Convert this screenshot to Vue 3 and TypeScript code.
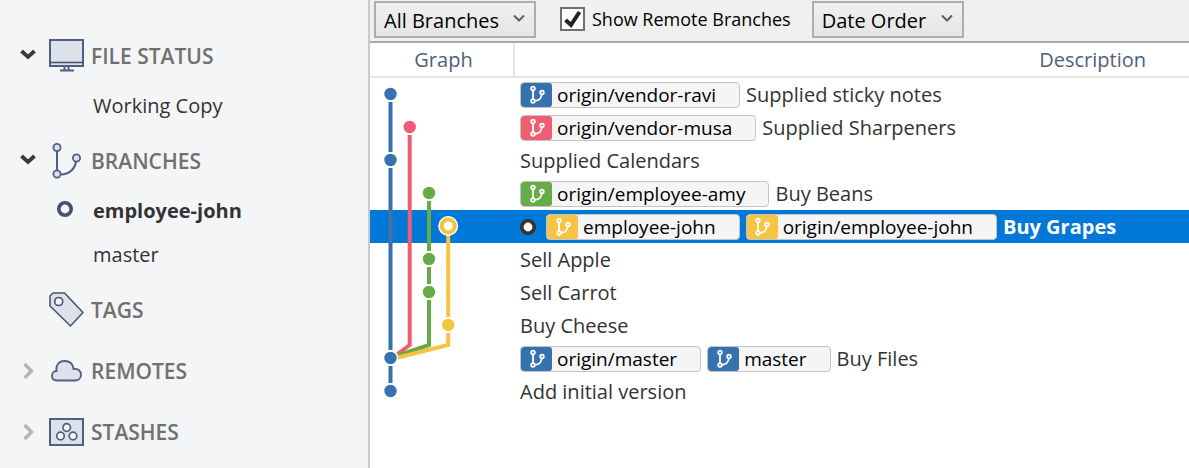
<script setup lang="ts">
import { ref } from 'vue'

type Icon = 'monitor' | 'branch' | 'tag' | 'cloud' | 'stash'
interface Section {
  label: string
  icon: Icon
  caret: 'open' | 'closed' | 'none'
  items: { name: string; current?: boolean }[]
}
interface Dot { lane: number; color: string; ring?: boolean }
interface Line { d: string; color: string }
interface Commit {
  message: string
  tags: { name: string; color: string }[]
  dot: Dot
  lines: Line[]
  selected?: boolean
}

const BLUE = '#3572b0'
const PINK = '#f15c75'
const GREEN = '#67ab49'
const YELLOW = '#f6c342'
const STEEL = '#4b6f9f'

const LANES = [20.5, 39.7, 59, 78.2]
const full = (lane: number, color: string): Line => ({ d: `M${LANES[lane]} 0V33`, color })
const above = (lane: number, color: string): Line => ({ d: `M${LANES[lane]} 0V8`, color })
const below = (lane: number, color: string): Line => ({ d: `M${LANES[lane]} 24V33`, color })

const sections: Section[] = [
  { label: 'FILE STATUS', icon: 'monitor', caret: 'open', items: [{ name: 'Working Copy' }] },
  {
    label: 'BRANCHES', icon: 'branch', caret: 'open',
    items: [{ name: 'employee-john', current: true }, { name: 'master' }],
  },
  { label: 'TAGS', icon: 'tag', caret: 'none', items: [] },
  { label: 'REMOTES', icon: 'cloud', caret: 'closed', items: [] },
  { label: 'STASHES', icon: 'stash', caret: 'closed', items: [] },
]

const commits: Commit[] = [
  {
    message: 'Supplied sticky notes', tags: [{ name: 'origin/vendor-ravi', color: BLUE }],
    dot: { lane: 0, color: BLUE }, lines: [below(0, BLUE)],
  },
  {
    message: 'Supplied Sharpeners', tags: [{ name: 'origin/vendor-musa', color: PINK }],
    dot: { lane: 1, color: PINK }, lines: [full(0, BLUE), below(1, PINK)],
  },
  {
    message: 'Supplied Calendars', tags: [],
    dot: { lane: 0, color: BLUE }, lines: [above(0, BLUE), below(0, BLUE), full(1, PINK)],
  },
  {
    message: 'Buy Beans', tags: [{ name: 'origin/employee-amy', color: GREEN }],
    dot: { lane: 2, color: GREEN }, lines: [full(0, BLUE), full(1, PINK), below(2, GREEN)],
  },
  {
    message: 'Buy Grapes', selected: true,
    tags: [{ name: 'employee-john', color: YELLOW }, { name: 'origin/employee-john', color: YELLOW }],
    dot: { lane: 3, color: YELLOW, ring: true },
    lines: [full(0, STEEL), full(1, PINK), full(2, GREEN), below(3, YELLOW)],
  },
  {
    message: 'Sell Apple', tags: [], dot: { lane: 2, color: GREEN },
    lines: [full(0, BLUE), full(1, PINK), above(2, GREEN), below(2, GREEN), full(3, YELLOW)],
  },
  {
    message: 'Sell Carrot', tags: [], dot: { lane: 2, color: GREEN },
    lines: [full(0, BLUE), full(1, PINK), above(2, GREEN), below(2, GREEN), full(3, YELLOW)],
  },
  {
    message: 'Buy Cheese', tags: [], dot: { lane: 3, color: YELLOW },
    lines: [full(0, BLUE), full(1, PINK), full(2, GREEN), above(3, YELLOW), below(3, YELLOW)],
  },
  {
    message: 'Buy Files', tags: [{ name: 'origin/master', color: BLUE }, { name: 'master', color: BLUE }],
    dot: { lane: 0, color: BLUE },
    lines: [
      above(0, BLUE), below(0, BLUE),
      { d: 'M39.7 0V3L27.5 12', color: PINK },
      { d: 'M59 0V3L28 13.5', color: GREEN },
      { d: 'M78.2 0V3L28 15.5', color: YELLOW },
    ],
  },
  { message: 'Add initial version', tags: [], dot: { lane: 0, color: BLUE }, lines: [above(0, BLUE)] },
]

const branchFilter = ref('All Branches')
const order = ref('Date Order')
const showRemote = ref(true)
</script>

<template>
  <div class="app">
    <nav class="sidebar" aria-label="Repository">
      <section v-for="s in sections" :key="s.label" class="group">
        <button type="button" class="heading">
          <span class="caret">
            <svg v-if="s.caret === 'open'" width="16" height="14" viewBox="0 0 16 14">
              <path d="M1.500 2 8 8l6.500-6" fill="none" stroke="#3a3a3a" stroke-width="3.800" />
            </svg>
            <svg v-else-if="s.caret === 'closed'" width="16" height="16" viewBox="0 0 16 16">
              <path d="M4.500 1 11.500 8l-7 7" fill="none" stroke="#b4b4b4" stroke-width="3.400" />
            </svg>
          </span>
          <span class="icon">
            <svg v-if="s.icon === 'monitor'" width="35" height="34" viewBox="0 0 35 34">
              <rect x="1" y="1" width="33" height="26" fill="#dde1ea" stroke="#505f81" stroke-width="2" />
              <path d="M1 23.500h33" stroke="#42526e" stroke-width="1.500" />
              <path d="M15.500 28v3M19.500 28v3" stroke="#505f81" stroke-width="2" />
              <path d="M11 31.500h14" stroke="#505f81" stroke-width="2" />
            </svg>
            <svg v-else-if="s.icon === 'branch'" width="35" height="36" viewBox="0 0 35 36" fill="none" stroke="#505f81">
              <path d="M8 8v19M12 31.500C20 31.500 26 26 27 18.500" stroke-width="2" />
              <g fill="#dde1ea" stroke-width="1.800">
                <circle cx="8" cy="4.500" r="3.600" />
                <circle cx="8" cy="31" r="3.600" />
                <circle cx="27.500" cy="15" r="3.600" />
              </g>
            </svg>
            <svg v-else-if="s.icon === 'tag'" width="35" height="36" viewBox="0 0 35 36" stroke="#42526e">
              <path d="M1 4 4 1h11.500L34 20.500 21.500 34 1 14z" fill="#dde1ea" stroke-width="1.500" />
              <circle cx="9.700" cy="9.500" r="4" fill="#f4f5f7" stroke-width="1.600" />
            </svg>
            <svg v-else-if="s.icon === 'cloud'" width="35" height="24" viewBox="0 0 35 24">
              <path d="M8 21.500C4.500 21.500 3 19.500 3 17c0-3 2-5 4.500-5C6.500 6 10 2 15.500 2c5 0 8.500 3 9 8 4-.8 7.500 1.800 7.500 5.700 0 3.500-2.500 5.800-6 5.800z" fill="#dde1ea" stroke="#505f81" stroke-width="1.800" />
            </svg>
            <svg v-else width="35" height="28" viewBox="0 0 35 28" stroke="#505f81">
              <rect x="1" y="1" width="33" height="26" fill="#dde1ea" stroke-width="2" />
              <g fill="#f4f5f7" stroke-width="1.700">
                <circle cx="17.700" cy="9.500" r="3.800" />
                <circle cx="11.500" cy="18" r="3.800" />
                <circle cx="24" cy="18" r="3.800" />
              </g>
            </svg>
          </span>
          <span>{{ s.label }}</span>
        </button>
        <a v-for="item in s.items" :key="item.name" href="#" class="item" :class="{ current: item.current }">
          <span class="marker">
            <svg v-if="item.current" class="current-dot" width="16" height="16" viewBox="0 0 16 16">
              <circle cx="8" cy="8" r="6.200" fill="#f4f5f7" stroke="#42526e" stroke-width="3.600" />
            </svg>
          </span>
          {{ item.name }}
        </a>
      </section>
    </nav>

    <main class="main">
      <div class="toolbar">
        <span class="drop">
          <select v-model="branchFilter" class="branches" aria-label="Branches shown">
            <option>All Branches</option>
            <option>Current Branch</option>
          </select>
          <svg class="arrow" width="12" height="9" viewBox="0 0 12 9">
            <path d="M1 1.500 6 6.500l5-5" fill="none" stroke="#606060" stroke-width="2" />
          </svg>
        </span>
        <label class="check">
          <span class="box">
            <input v-model="showRemote" type="checkbox" />
            <svg v-if="showRemote" class="tick" width="25" height="24" viewBox="0 0 25 24">
              <path d="M5.500 13 11 18 19.500 5" fill="none" stroke="#222" stroke-width="4" />
            </svg>
          </span>
          Show Remote Branches
        </label>
        <span class="drop">
          <select v-model="order" class="order" aria-label="Sort order">
            <option>Date Order</option>
            <option>Ancestor Order</option>
          </select>
          <svg class="arrow" width="12" height="9" viewBox="0 0 12 9">
            <path d="M1 1.500 6 6.500l5-5" fill="none" stroke="#606060" stroke-width="2" />
          </svg>
        </span>
      </div>

      <table class="log">
        <thead>
          <tr>
            <th class="graph-col" scope="col">Graph</th>
            <th class="desc-col" scope="col">Description</th>
          </tr>
        </thead>
        <tbody>
          <tr v-for="c in commits" :key="c.message" :class="{ selected: c.selected }">
            <td>
              <svg class="graph" width="120" height="33" viewBox="0 0 120 33">
                <path v-for="(l, i) in c.lines" :key="i" :d="l.d" :stroke="l.color" fill="none" stroke-width="4" />
                <template v-if="c.dot.ring">
                  <circle :cx="LANES[c.dot.lane]" cy="16" r="10" fill="#fff" />
                  <circle :cx="LANES[c.dot.lane]" cy="16" r="6.500" fill="#fff" :stroke="c.dot.color" stroke-width="4" />
                </template>
                <circle v-else :cx="LANES[c.dot.lane]" cy="16" r="6.200" :fill="c.dot.color" />
              </svg>
            </td>
            <td>
              <div class="desc">
                <svg v-if="c.selected" class="head" width="16" height="16" viewBox="0 0 16 16">
                  <circle cx="8" cy="8" r="6.200" fill="#fff" stroke="#333" stroke-width="3.600" />
                </svg>
                <span v-for="t in c.tags" :key="t.name" class="tag">
                  <span class="swatch" :style="{ background: t.color }">
                    <svg width="16" height="20" viewBox="0 0 16 20" fill="none" stroke="#fff" stroke-width="1.800">
                      <circle cx="4" cy="3.500" r="1.800" />
                      <circle cx="4" cy="16" r="1.800" />
                      <circle cx="13" cy="7.500" r="1.800" />
                      <path d="M4 5.500v8.500M6 15.800c4-.3 6.300-2.600 6.800-6.300" />
                    </svg>
                  </span>
                  <span class="tag-name">{{ t.name }}</span>
                </span>
                <span>{{ c.message }}</span>
              </div>
            </td>
          </tr>
        </tbody>
      </table>
    </main>
  </div>
</template>

<style>
body {
  margin: 0;
  overflow: hidden;
}
</style>

<style scoped>
.app {
  display: flex;
  min-height: 100vh;
  font-family: "Open Sans", "Noto Sans", sans-serif;
  font-size: 20px;
  line-height: 28px;
  color: #333;
  background: #fff;
}
.sidebar {
  flex: 0 0 368px;
  box-sizing: border-box;
  padding-top: 28px;
  background: #f4f5f7;
}
.group {
  margin-bottom: 5px;
}
.heading {
  display: flex;
  align-items: center;
  width: 100%;
  height: 56px;
  padding: 0 0 0 20px;
  border: 0;
  background: none;
  color: #707070;
  font: inherit;
  font-size: 21px;
  font-weight: 600;
  text-align: left;
}
.caret {
  display: flex;
  width: 16px;
  margin-right: 13px;
}
.icon {
  display: flex;
  width: 35px;
  margin-right: 7px;
}
.item {
  display: flex;
  align-items: center;
  height: 44px;
  padding-left: 57px;
  color: #333;
  text-decoration: none;
}
.current {
  font-weight: 700;
}
.marker {
  display: flex;
  width: 36px;
  padding-bottom: 5px;
}
.main {
  flex: 1;
  min-width: 0;
  overflow: hidden;
  border-left: 2px solid #c9cacd;
}
.toolbar {
  display: flex;
  align-items: flex-start;
  box-sizing: border-box;
  height: 43px;
  padding: 1px 4px 0;
  border-bottom: 2px solid #a9a9a9;
  background: #f0f0f0;
  color: #000;
}
.drop {
  position: relative;
  display: flex;
}
select {
  height: 37px;
  padding: 2px 0 0 8px;
  border: 2px solid #adadad;
  border-radius: 0;
  background: linear-gradient(#f0f0f0, #e5e5e5);
  color: #000;
  font: inherit;
  appearance: none;
}
.branches {
  width: 162px;
}
.order {
  width: 152px;
}
.arrow {
  position: absolute;
  right: 11px;
  top: 13px;
  pointer-events: none;
}
.check {
  display: flex;
  align-items: center;
  gap: 7px;
  height: 36px;
  margin: 0 21px 0 24px;
  font-size: 18px;
  white-space: nowrap;
}
.box {
  position: relative;
  display: flex;
}
.box input {
  width: 25px;
  height: 24px;
  margin: 0;
  box-sizing: border-box;
  border: 2px solid #707070;
  background: #fff;
  appearance: none;
}
.tick {
  position: absolute;
  inset: 0;
  pointer-events: none;
}
.log {
  width: 100%;
  table-layout: fixed;
  border-collapse: separate;
  border-spacing: 0;
}
th {
  box-sizing: border-box;
  height: 35px;
  padding: 0;
  border-bottom: 2px solid #e5e5e5;
  color: #505f79;
  font-weight: 400;
}
.graph-col {
  width: 145px;
  padding-left: 4px;
  border-right: 2px solid #e5e5e5;
}
.desc-col {
  padding-right: 43px;
  text-align: right;
}
td {
  height: 33px;
  padding: 0;
}
.graph {
  display: block;
}
.desc {
  display: flex;
  align-items: center;
  gap: 6px;
  height: 33px;
  padding-left: 5px;
  white-space: nowrap;
}
.selected {
  background: #0078d7;
  color: #fff;
  font-weight: 700;
}
.head {
  margin-right: 4px;
}
.tag {
  display: flex;
  box-sizing: border-box;
  height: 26px;
  border: 1px solid #c4c4c4;
  border-radius: 4px;
  background: #f5f5f5;
  color: #000;
  font-size: 19px;
  font-weight: 400;
  line-height: 24px;
  overflow: hidden;
}
.swatch {
  display: flex;
  align-items: center;
  justify-content: center;
  width: 31px;
  border-radius: 3px;
}
.tag-name {
  padding: 0 23px 0 5px;
}
</style>
